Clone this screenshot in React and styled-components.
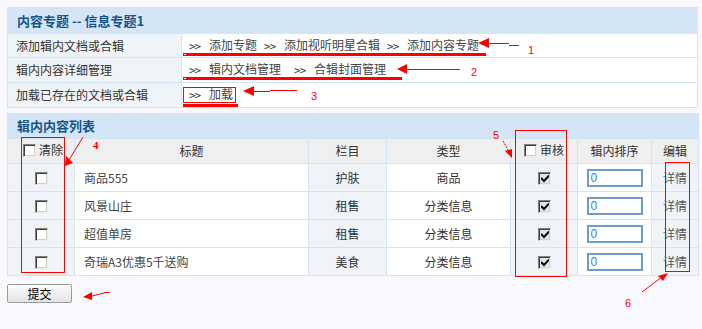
import React from "react";
import styled, { createGlobalStyle } from "styled-components";

const Global = createGlobalStyle`
  html, body { margin: 0; padding: 0; }
  body {
    background: #f8f8fd;
    font-family: "Noto Sans CJK SC", "Liberation Sans", sans-serif;
    font-size: 12px;
    color: #333;
  }
`;

const Page = styled.div`
  position: relative;
  width: 702px;
  height: 329px;
  padding: 7px 0 0 7px;
  box-sizing: border-box;
`;

const Panel = styled.table`
  width: 691px;
  border-collapse: collapse;
  table-layout: fixed;
  margin-bottom: ${(p) => p.$gap || 0}px;
  td, th {
    border: 1px solid #d3e5f5;
    padding: 0;
    line-height: 14px;
  }
`;

const HeadCell = styled.td`
  background: #d4e6f6;
  height: ${(p) => p.$h}px;
  padding-left: 9px !important;
  font-weight: bold;
  font-size: 13px;
  color: #14568b;
  text-align: left;
`;

const Label = styled.td`
  background: #eff4f9;
  height: ${(p) => p.$h || 24}px;
  padding-left: 8px !important;
  color: #333;
`;

const LinkCell = styled.td`
  background: #fff;
  padding-left: 7px !important;
  white-space: nowrap;
  color: #444;
`;

const Arrows = styled.span`
  display: inline-block;
  width: 20px;
  font-family: "DejaVu Sans Mono", monospace;
  font-size: 11px;
  color: #333;
  letter-spacing: -1px;
`;

const Link = styled.span`
  margin-right: ${(p) => p.$mr || 7}px;
`;

const ColHead = styled.th`
  background: #efefef;
  height: 24px;
  font-weight: normal;
  color: #333;
  text-align: ${(p) => (p.$left ? "left" : "center")};
  padding-left: ${(p) => (p.$left ? "15px" : "0")} !important;
`;

const Cell = styled.td`
  background: ${(p) => (p.$shade ? "#f0f4f8" : "#fff")};
  height: 27px;
  text-align: ${(p) => (p.$left ? "left" : "center")};
  padding-left: ${(p) => (p.$left ? "9px" : "0")} !important;
  color: ${(p) => p.$color || "#333"};
`;

const Check = styled.span`
  display: inline-block;
  vertical-align: middle;
  width: 13px;
  height: 13px;
  box-sizing: border-box;
  border: 1px solid;
  border-color: #808080 #ececec #ececec #808080;
  box-shadow: inset 1px 1px 0 #404040, inset -1px -1px 0 #d4d0c8;
  background: ${(p) => (p.$checked ? "#e4e4e4" : "#fff")};
  margin-right: ${(p) => p.$mr || 0}px;
  position: relative;
  svg { position: absolute; left: 2px; top: 2px; }
`;

const HeadLabel = styled.span`
  display: inline-flex;
  align-items: center;
`;

const OrderInput = styled.input`
  width: 56px;
  height: 18px;
  box-sizing: border-box;
  border: 2px solid #6f9dcb;
  padding: 0 0 0 2px;
  font-family: "Liberation Sans", sans-serif;
  font-size: 12px;
  color: #3b80c4;
  background: #fff;
  vertical-align: middle;
  outline: none;
`;

const SubmitButton = styled.button`
  display: block;
  margin-top: 8px;
  width: 65px;
  height: 19px;
  padding: 0;
  border: 1px solid #9a9a9a;
  border-radius: 2px;
  background: linear-gradient(#fdfdfd, #e2e2e2);
  font-family: "Noto Sans CJK SC", sans-serif;
  font-size: 12px;
  line-height: 15px;
  color: #000;
`;

const Overlay = styled.svg`
  position: absolute;
  left: 0;
  top: 0;
  pointer-events: none;
  text {
    font-family: "Liberation Sans", sans-serif;
    font-size: 11px;
    fill: #f00;
  }
`;

const CheckBox = ({ checked, mr }) => (
  <Check $checked={checked} $mr={mr}>
    {checked && (
      <svg width="8" height="8" viewBox="0 0 8 8">
        <path d="M0 3 L3 6 L8 0.5" stroke="#000" strokeWidth="2" fill="none" />
      </svg>
    )}
  </Check>
);

const rows = [
  { title: "商品555", col: "护肤", type: "商品" },
  { title: "风景山庄", col: "租售", type: "分类信息" },
  { title: "超值单房", col: "租售", type: "分类信息" },
  { title: "奇瑞A3优惠5千送购", col: "美食", type: "分类信息" },
];

const Annotations = () => (
  <Overlay width="702" height="329" viewBox="0 0 702 329">
    {/* 1 */}
    <rect x="183" y="53" width="303" height="3" fill="#f00" />
    <rect x="184" y="54" width="2" height="1" fill="#fff" />
    <polygon points="478,43 489,38 489,48" fill="#f00" />
    <line x1="489" y1="43.5" x2="509" y2="43.5" stroke="#f00" />
    <line x1="509" y1="45.5" x2="519" y2="45.5" stroke="#f00" />
    <text x="528" y="54">1</text>
    {/* 2 */}
    <rect x="183" y="77" width="219" height="3" fill="#f00" />
    <rect x="184" y="78" width="2" height="1" fill="#fff" />
    <polygon points="397,69 407,64 407,74" fill="#f00" />
    <line x1="407" y1="69.5" x2="460" y2="69.5" stroke="#f00" />
    <text x="471" y="76">2</text>
    {/* 3 */}
    <rect x="183.5" y="87.5" width="52" height="15" fill="none" stroke="#f00" />
    <rect x="183" y="104" width="55" height="3" fill="#f00" />
    <polygon points="243,91 254,86 254,96" fill="#f00" />
    <line x1="254" y1="91.5" x2="270" y2="91.5" stroke="#f00" />
    <line x1="270" y1="90.5" x2="297" y2="90.5" stroke="#f00" />
    <text x="311" y="100">3</text>
    {/* 4 */}
    <rect x="21.5" y="137.5" width="43" height="135" fill="none" stroke="#f00" />
    <line x1="83" y1="137" x2="69" y2="160" stroke="#f00" />
    <polygon points="65,166 66,156 73,163" fill="#f00" />
    <text x="93" y="149" style={{ fontWeight: "bold", fontFamily: "Liberation Serif, serif" }}>4</text>
    {/* 5 */}
    <rect x="515.5" y="130.5" width="51" height="146" fill="none" stroke="#f00" />
    <line x1="503" y1="141" x2="509" y2="152" stroke="#f00" strokeDasharray="2 1" />
    <polygon points="512,158 505,151 512,149" fill="#f00" />
    <text x="493" y="139">5</text>
    {/* 6 */}
    <rect x="665.5" y="162.5" width="24" height="109" fill="none" stroke="#f00" />
    <line x1="642" y1="292" x2="662" y2="277" stroke="#f00" />
    <polygon points="668,273 658,276 663,281" fill="#f00" />
    <text x="625" y="307">6</text>
    {/* 7 */}
    <polygon points="83,297 92,292 92,300" fill="#f00" />
    <polyline points="92,296 100,294 104,293" fill="none" stroke="#f00" />
    <line x1="104" y1="292.5" x2="110" y2="292.5" stroke="#f00" />
  </Overlay>
);

export default function App() {
  return (
    <>
      <Global />
      <Page>
        <Panel $gap={5}>
          <colgroup>
            <col style={{ width: 174 }} />
            <col />
          </colgroup>
          <tbody>
            <tr>
              <HeadCell colSpan={2} $h={25}>内容专题 -- 信息专题1</HeadCell>
            </tr>
            <tr>
              <Label $h={23}>添加辑内文档或合辑</Label>
              <LinkCell>
                <Arrows>&gt;&gt;</Arrows><Link>添加专题</Link>
                <Arrows>&gt;&gt;</Arrows><Link>添加视听明星合辑</Link>
                <Arrows>&gt;&gt;</Arrows><Link>添加内容专题</Link>
              </LinkCell>
            </tr>
            <tr>
              <Label>辑内内容详细管理</Label>
              <LinkCell>
                <Arrows>&gt;&gt;</Arrows><Link $mr={13}>辑内文档管理</Link>
                <Arrows>&gt;&gt;</Arrows><Link>合辑封面管理</Link>
              </LinkCell>
            </tr>
            <tr>
              <Label>加载已存在的文档或合辑</Label>
              <LinkCell>
                <Arrows>&gt;&gt;</Arrows><Link>加载</Link>
              </LinkCell>
            </tr>
          </tbody>
        </Panel>

        <Panel>
          <colgroup>
            <col style={{ width: 67 }} />
            <col style={{ width: 234 }} />
            <col style={{ width: 78 }} />
            <col style={{ width: 124 }} />
            <col style={{ width: 67 }} />
            <col style={{ width: 74 }} />
            <col style={{ width: 47 }} />
          </colgroup>
          <tbody>
            <tr>
              <HeadCell colSpan={7} $h={24}>辑内内容列表</HeadCell>
            </tr>
            <tr>
              <ColHead $left>
                <HeadLabel><CheckBox mr={3} />清除</HeadLabel>
              </ColHead>
              <ColHead>标题</ColHead>
              <ColHead>栏目</ColHead>
              <ColHead>类型</ColHead>
              <ColHead>
                <HeadLabel><CheckBox mr={3} />审核</HeadLabel>
              </ColHead>
              <ColHead>辑内排序</ColHead>
              <ColHead>编辑</ColHead>
            </tr>
            {rows.map((r) => (
              <tr key={r.title}>
                <Cell $shade><CheckBox /></Cell>
                <Cell $left $color="#444">{r.title}</Cell>
                <Cell $shade>{r.col}</Cell>
                <Cell>{r.type}</Cell>
                <Cell $shade><CheckBox checked /></Cell>
                <Cell><OrderInput defaultValue="0" /></Cell>
                <Cell $shade $color="#555">详情</Cell>
              </tr>
            ))}
          </tbody>
        </Panel>

        <SubmitButton>提交</SubmitButton>
        <Annotations />
      </Page>
    </>
  );
}
